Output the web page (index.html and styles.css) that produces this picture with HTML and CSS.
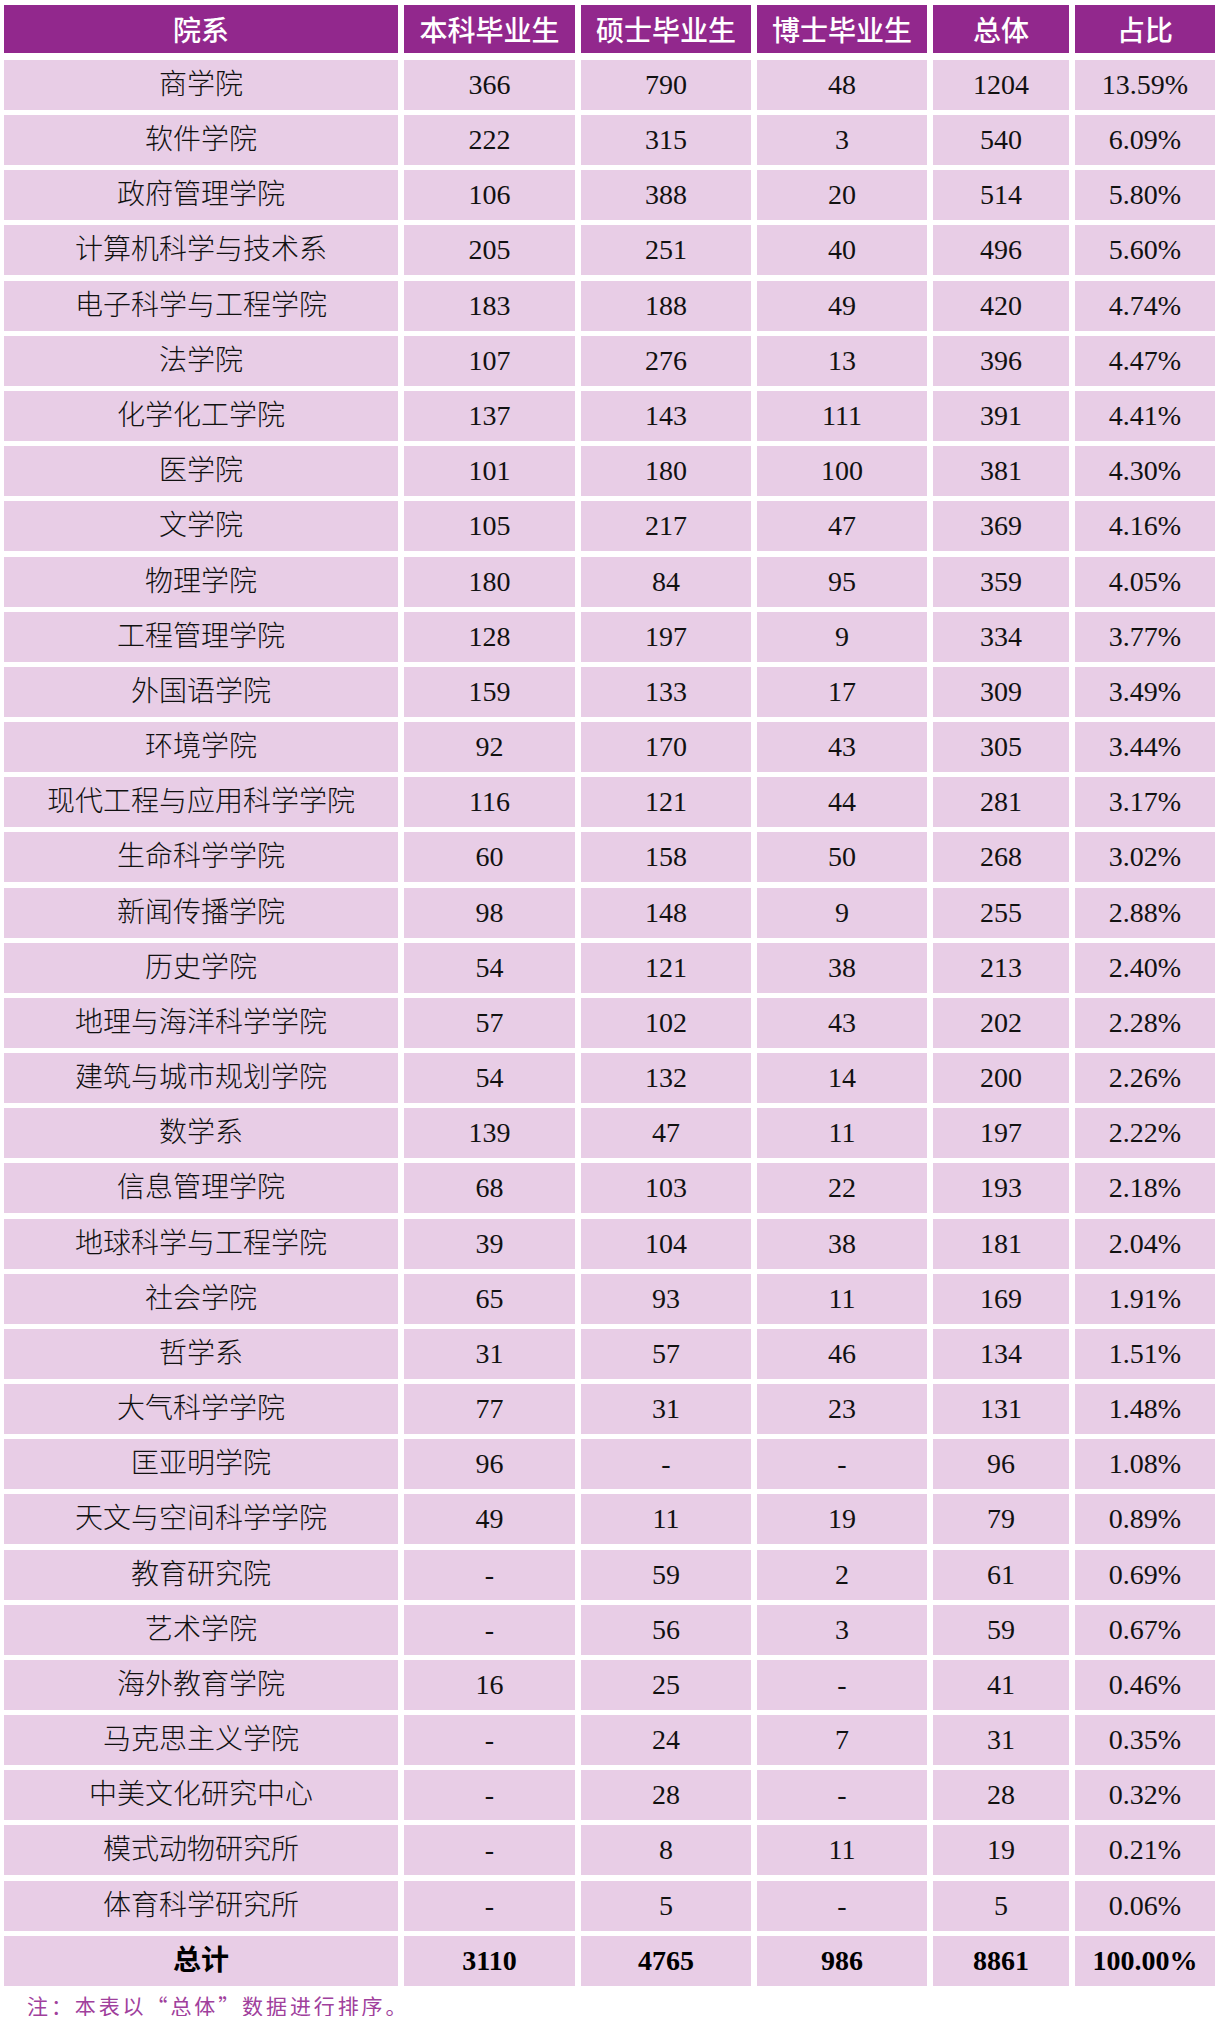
FILE: index.html
```html
<!DOCTYPE html>
<html lang="zh-CN">
<head>
<meta charset="utf-8">
<title>各院系毕业生人数</title>
<link rel="stylesheet" href="styles.css">
</head>
<body>
<div class="page">
  <div class="table">
    <div class="row head"><div class="c">院系</div><div class="c">本科毕业生</div><div class="c">硕士毕业生</div><div class="c">博士毕业生</div><div class="c">总体</div><div class="c">占比</div></div>
    <div class="row"><div class="c">商学院</div><div class="c">366</div><div class="c">790</div><div class="c">48</div><div class="c">1204</div><div class="c">13.59%</div></div>
    <div class="row"><div class="c">软件学院</div><div class="c">222</div><div class="c">315</div><div class="c">3</div><div class="c">540</div><div class="c">6.09%</div></div>
    <div class="row"><div class="c">政府管理学院</div><div class="c">106</div><div class="c">388</div><div class="c">20</div><div class="c">514</div><div class="c">5.80%</div></div>
    <div class="row"><div class="c">计算机科学与技术系</div><div class="c">205</div><div class="c">251</div><div class="c">40</div><div class="c">496</div><div class="c">5.60%</div></div>
    <div class="row"><div class="c">电子科学与工程学院</div><div class="c">183</div><div class="c">188</div><div class="c">49</div><div class="c">420</div><div class="c">4.74%</div></div>
    <div class="row"><div class="c">法学院</div><div class="c">107</div><div class="c">276</div><div class="c">13</div><div class="c">396</div><div class="c">4.47%</div></div>
    <div class="row"><div class="c">化学化工学院</div><div class="c">137</div><div class="c">143</div><div class="c">111</div><div class="c">391</div><div class="c">4.41%</div></div>
    <div class="row"><div class="c">医学院</div><div class="c">101</div><div class="c">180</div><div class="c">100</div><div class="c">381</div><div class="c">4.30%</div></div>
    <div class="row"><div class="c">文学院</div><div class="c">105</div><div class="c">217</div><div class="c">47</div><div class="c">369</div><div class="c">4.16%</div></div>
    <div class="row"><div class="c">物理学院</div><div class="c">180</div><div class="c">84</div><div class="c">95</div><div class="c">359</div><div class="c">4.05%</div></div>
    <div class="row"><div class="c">工程管理学院</div><div class="c">128</div><div class="c">197</div><div class="c">9</div><div class="c">334</div><div class="c">3.77%</div></div>
    <div class="row"><div class="c">外国语学院</div><div class="c">159</div><div class="c">133</div><div class="c">17</div><div class="c">309</div><div class="c">3.49%</div></div>
    <div class="row"><div class="c">环境学院</div><div class="c">92</div><div class="c">170</div><div class="c">43</div><div class="c">305</div><div class="c">3.44%</div></div>
    <div class="row"><div class="c">现代工程与应用科学学院</div><div class="c">116</div><div class="c">121</div><div class="c">44</div><div class="c">281</div><div class="c">3.17%</div></div>
    <div class="row"><div class="c">生命科学学院</div><div class="c">60</div><div class="c">158</div><div class="c">50</div><div class="c">268</div><div class="c">3.02%</div></div>
    <div class="row"><div class="c">新闻传播学院</div><div class="c">98</div><div class="c">148</div><div class="c">9</div><div class="c">255</div><div class="c">2.88%</div></div>
    <div class="row"><div class="c">历史学院</div><div class="c">54</div><div class="c">121</div><div class="c">38</div><div class="c">213</div><div class="c">2.40%</div></div>
    <div class="row"><div class="c">地理与海洋科学学院</div><div class="c">57</div><div class="c">102</div><div class="c">43</div><div class="c">202</div><div class="c">2.28%</div></div>
    <div class="row"><div class="c">建筑与城市规划学院</div><div class="c">54</div><div class="c">132</div><div class="c">14</div><div class="c">200</div><div class="c">2.26%</div></div>
    <div class="row"><div class="c">数学系</div><div class="c">139</div><div class="c">47</div><div class="c">11</div><div class="c">197</div><div class="c">2.22%</div></div>
    <div class="row"><div class="c">信息管理学院</div><div class="c">68</div><div class="c">103</div><div class="c">22</div><div class="c">193</div><div class="c">2.18%</div></div>
    <div class="row"><div class="c">地球科学与工程学院</div><div class="c">39</div><div class="c">104</div><div class="c">38</div><div class="c">181</div><div class="c">2.04%</div></div>
    <div class="row"><div class="c">社会学院</div><div class="c">65</div><div class="c">93</div><div class="c">11</div><div class="c">169</div><div class="c">1.91%</div></div>
    <div class="row"><div class="c">哲学系</div><div class="c">31</div><div class="c">57</div><div class="c">46</div><div class="c">134</div><div class="c">1.51%</div></div>
    <div class="row"><div class="c">大气科学学院</div><div class="c">77</div><div class="c">31</div><div class="c">23</div><div class="c">131</div><div class="c">1.48%</div></div>
    <div class="row"><div class="c">匡亚明学院</div><div class="c">96</div><div class="c">-</div><div class="c">-</div><div class="c">96</div><div class="c">1.08%</div></div>
    <div class="row"><div class="c">天文与空间科学学院</div><div class="c">49</div><div class="c">11</div><div class="c">19</div><div class="c">79</div><div class="c">0.89%</div></div>
    <div class="row"><div class="c">教育研究院</div><div class="c">-</div><div class="c">59</div><div class="c">2</div><div class="c">61</div><div class="c">0.69%</div></div>
    <div class="row"><div class="c">艺术学院</div><div class="c">-</div><div class="c">56</div><div class="c">3</div><div class="c">59</div><div class="c">0.67%</div></div>
    <div class="row"><div class="c">海外教育学院</div><div class="c">16</div><div class="c">25</div><div class="c">-</div><div class="c">41</div><div class="c">0.46%</div></div>
    <div class="row"><div class="c">马克思主义学院</div><div class="c">-</div><div class="c">24</div><div class="c">7</div><div class="c">31</div><div class="c">0.35%</div></div>
    <div class="row"><div class="c">中美文化研究中心</div><div class="c">-</div><div class="c">28</div><div class="c">-</div><div class="c">28</div><div class="c">0.32%</div></div>
    <div class="row"><div class="c">模式动物研究所</div><div class="c">-</div><div class="c">8</div><div class="c">11</div><div class="c">19</div><div class="c">0.21%</div></div>
    <div class="row"><div class="c">体育科学研究所</div><div class="c">-</div><div class="c">5</div><div class="c">-</div><div class="c">5</div><div class="c">0.06%</div></div>
    <div class="row total"><div class="c">总计</div><div class="c">3110</div><div class="c">4765</div><div class="c">986</div><div class="c">8861</div><div class="c">100.00%</div></div>
  </div>
  <p class="note">注：本表以“总体”数据进行排序。</p>
</div>
</body>
</html>
```

FILE: styles.css
```css
html, body {
  margin: 0;
  padding: 0;
  background: #ffffff;
}

.page {
  padding: 5px 0 0 4px;
}

.table {
  display: flex;
  flex-direction: column;
  gap: 5.18px;
}

.row {
  display: grid;
  grid-template-columns: 394px 171px 170px 170px 136px 140px;
  column-gap: 6px;
  height: 50px;
}

.c {
  display: flex;
  align-items: center;
  justify-content: center;
  background: #e8cde6;
  color: #111111;
  font-family: "Liberation Serif", "Noto Sans CJK SC", serif;
  font-size: 28px;
  font-weight: 300;
  line-height: 1;
  white-space: nowrap;
}

.row.head {
  height: 48px;
  margin-bottom: 1.8px;
}

.row.head .c {
  background: #92288d;
  color: #ffffff;
  font-family: "Noto Sans CJK SC", sans-serif;
  font-size: 28px;
  font-weight: 500;
}

.row.total .c {
  font-weight: 700;
  color: #000000;
}

.note {
  margin: 8px 0 0 23px;
  font-family: "Noto Sans CJK SC", sans-serif;
  font-size: 21px;
  line-height: 22px;
  letter-spacing: 2.9px;
  color: #a0409c;
}
```
